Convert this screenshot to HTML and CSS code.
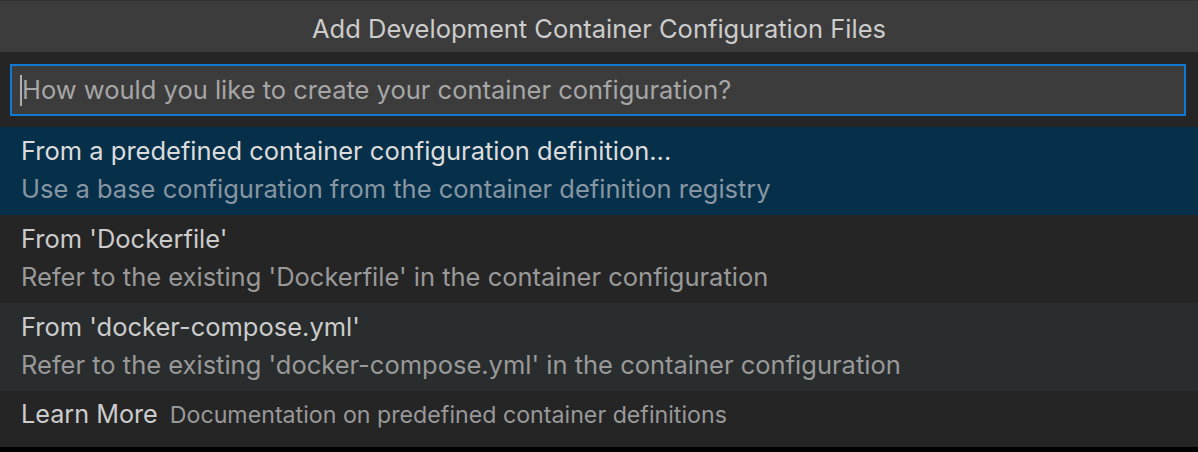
FILE: index.html
```html
<!DOCTYPE html>
<html>
<head>
<meta charset="utf-8">
<link rel="stylesheet" href="styles.css">
</head>
<body>
<div class="widget">
  <div class="title">Add Development Container Configuration Files</div>
  <div class="input-wrap">
    <div class="input"><span class="caret"></span><span class="placeholder">How would you like to create your container configuration?</span></div>
  </div>
  <div class="list">
    <div class="row selected">
      <div class="label">From a predefined container configuration definition...</div>
      <div class="desc">Use a base configuration from the container definition registry</div>
    </div>
    <div class="row">
      <div class="label">From 'Dockerfile'</div>
      <div class="desc">Refer to the existing 'Dockerfile' in the container configuration</div>
    </div>
    <div class="row hover">
      <div class="label">From 'docker-compose.yml'</div>
      <div class="desc">Refer to the existing 'docker-compose.yml' in the container configuration</div>
    </div>
    <div class="row single">
      <span class="label">Learn More</span>
      <span class="desc">Documentation on predefined container definitions</span>
    </div>
  </div>
</div>
<div class="below"></div>
</body>
</html>
```

FILE: styles.css
```css
html, body {
  margin: 0;
  padding: 0;
  background: #000;
}
body {
  width: 1198px;
  height: 452px;
  overflow: hidden;
  font-family: Inter, "Open Sans", "Liberation Sans", sans-serif;
  -webkit-font-smoothing: antialiased;
}
.widget {
  background: #252526;
  height: 447px;
}
.title {
  height: 52px;
  box-sizing: border-box;
  border-top: 1px solid #333333;
  background: #3c3c3c;
  color: #cccccc;
  font-size: 25.5px;
  display: flex;
  align-items: center;
  justify-content: center;
  padding-top: 4px;
}
.input-wrap {
  padding: 12px 12px 11px 10px;
}
.input {
  height: 52px;
  box-sizing: border-box;
  border: 2px solid #0e7ad3;
  background: #3c3c3c;
  display: flex;
  align-items: center;
  padding-left: 8px;
}
.caret {
  width: 2px;
  height: 31px;
  background: #aeafad;
}
.placeholder {
  color: #a6a6a6;
  font-size: 25.5px;
  padding-bottom: 1px;
}
.list {
  display: flex;
  flex-direction: column;
}
.row {
  height: 88px;
  box-sizing: border-box;
  padding: 5px 21px 0;
  display: flex;
  flex-direction: column;
}
.row .label {
  color: #cccccc;
  font-size: 25.5px;
  line-height: 38px;
}
.row .desc {
  color: #999999;
  font-size: 25.5px;
  line-height: 38px;
}
.row.selected {
  background: #062f4a;
}
.row.selected .label {
  color: #dcdcdc;
}
.row.selected .desc {
  color: #8796a3;
}
.row.hover {
  background: #2a2d2e;
}
.row.single {
  flex-direction: row;
  align-items: baseline;
  gap: 12px;
  height: 55px;
  padding-top: 4px;
}
.row.single .label {
  font-size: 25.2px;
}
.row.single .desc {
  font-size: 23.2px;
}
.below {
  height: 5px;
  background: #000;
}
```
